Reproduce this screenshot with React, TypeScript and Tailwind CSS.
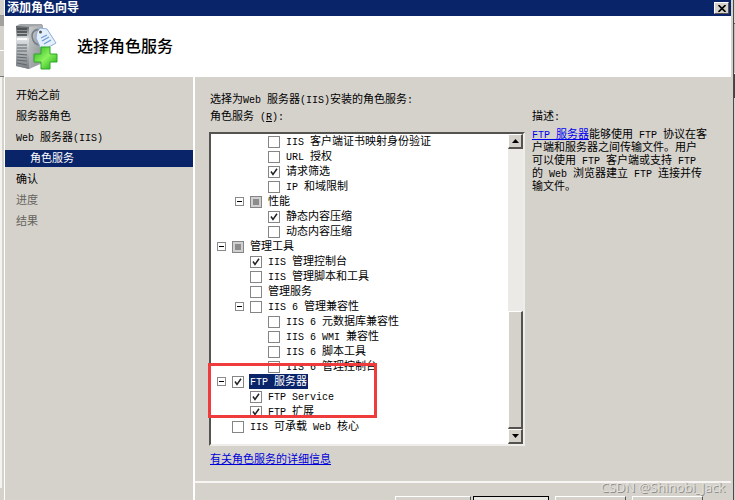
import { useState } from 'react';

type Check = 'on' | 'off' | 'mixed';

interface Role {
  id: string;
  label: string;
  level: 1 | 2 | 3;
  check: Check;
  parent?: boolean;
}

const ROLES: Role[] = [
  { id: 'cert', label: 'IIS 客户端证书映射身份验证', level: 3, check: 'off' },
  { id: 'url', label: 'URL 授权', level: 3, check: 'off' },
  { id: 'filter', label: '请求筛选', level: 3, check: 'on' },
  { id: 'ip', label: 'IP 和域限制', level: 3, check: 'off' },
  { id: 'perf', label: '性能', level: 2, check: 'mixed', parent: true },
  { id: 'static', label: '静态内容压缩', level: 3, check: 'on' },
  { id: 'dynamic', label: '动态内容压缩', level: 3, check: 'off' },
  { id: 'tools', label: '管理工具', level: 1, check: 'mixed', parent: true },
  { id: 'console', label: 'IIS 管理控制台', level: 2, check: 'on' },
  { id: 'scripts', label: 'IIS 管理脚本和工具', level: 2, check: 'off' },
  { id: 'service', label: '管理服务', level: 2, check: 'off' },
  { id: 'iis6', label: 'IIS 6 管理兼容性', level: 2, check: 'off', parent: true },
  { id: 'meta', label: 'IIS 6 元数据库兼容性', level: 3, check: 'off' },
  { id: 'wmi', label: 'IIS 6 WMI 兼容性', level: 3, check: 'off' },
  { id: 'script6', label: 'IIS 6 脚本工具', level: 3, check: 'off' },
  { id: 'console6', label: 'IIS 6 管理控制台', level: 3, check: 'off' },
  { id: 'ftp', label: 'FTP 服务器', level: 1, check: 'on', parent: true },
  { id: 'ftpsvc', label: 'FTP Service', level: 2, check: 'on' },
  { id: 'ftpext', label: 'FTP 扩展', level: 2, check: 'on' },
  { id: 'core', label: 'IIS 可承载 Web 核心', level: 1, check: 'off' },
];

const STEPS = ['开始之前', '服务器角色', 'Web 服务器(IIS)', '角色服务', '确认', '进度', '结果'];

const INDENT = { 1: 'pl-[6px]', 2: 'pl-[24px]', 3: 'pl-[42px]' };

const RAISED = 'border border-t-white border-l-white border-r-[#55534f] border-b-[#55534f] bg-[#d5d2cc]';

// Latin runs are set in a fixed-width face, about half as wide as the Chinese glyphs
const Mixed = ({ text }: { text: string }) => (
  <>
    {text.split(/([\x20-\x7e]+)/).map((part, i) =>
      i % 2 ? (
        <span key={i} className="font-['Liberation_Mono',monospace] text-[10px] leading-none whitespace-pre">{part}</span>
      ) : (
        part
      )
    )}
  </>
);

const ServerIcon = () => (
  <svg className="w-[44px] h-[48px] shrink-0" viewBox="0 0 44 48" aria-hidden="true">
    <defs>
      <linearGradient id="side" x1="0" y1="0" x2="1" y2="1">
        <stop offset="0" stopColor="#c9cbcc" />
        <stop offset="1" stopColor="#85898c" />
      </linearGradient>
      <linearGradient id="front" x1="0" y1="0" x2="0" y2="1">
        <stop offset="0" stopColor="#5c6063" />
        <stop offset="0.3" stopColor="#dfe3e6" />
        <stop offset="1" stopColor="#777d82" />
      </linearGradient>
      <linearGradient id="plus" x1="0" y1="0" x2="1" y2="1">
        <stop offset="0" stopColor="#27b51c" />
        <stop offset="0.5" stopColor="#8bf25d" />
        <stop offset="1" stopColor="#16a80f" />
      </linearGradient>
    </defs>
    <path d="M1 3 L5 1 H27 L28 4 V40 L14 46 L1 43Z" fill="#a4a7a9" />
    <path d="M14 4 L28 2 V38 L14 46Z" fill="url(#side)" />
    <path d="M1 3 L14 4 V46 L1 43Z" fill="url(#front)" />
    <path d="M2 6 H12 M2 9 H12 M2 12 H12" stroke="#3f4447" strokeWidth="1.4" />
    <path d="M2 16 H12" stroke="#fff" strokeWidth="2" />
    <path d="M2 22 H12 M2 25 H12 M2 28 H12 M2 31 L12 32 M2 34 L12 35 M2 37 L12 38 M2 40 L12 42" stroke="#62676b" strokeWidth="1.2" />
    <path d="M27 8 C20 4 15 10 18 17 C20 22 25 23 27 20" fill="none" stroke="#747d85" strokeWidth="1.5" />
    <path d="M22 9 L25 5 L32 6 L41 20 L27 28 L21 15Z" fill="#e4effc" stroke="#8faed3" />
    <circle cx="25.500" cy="9" r="1.500" fill="#555" />
    <path d="M26 15 L32 12 M27 18 L34 14 M29 21 L36 17" stroke="#6d9bd6" strokeWidth="1.3" />
    <path d="M26 24 H35 V31 H42 V39 H35 V46 H26 V39 H19 V31 H26Z" fill="url(#plus)" stroke="#2fa52a" strokeWidth="1" />
  </svg>
);

const RoleRow = ({ role, selected, onSelect }: { role: Role; selected: boolean; onSelect: () => void }) => {
  const [check, setCheck] = useState<Check>(role.check);

  return (
    <li className={`flex items-center gap-[6px] h-[15px] ${INDENT[role.level]}`}>
      {role.parent ? (
        <button aria-label="折叠" className="flex items-center justify-center w-[9px] h-[9px] border border-[#8a8a8a] bg-white shrink-0">
          <span className="w-[5px] h-px bg-black" />
        </button>
      ) : (
        <span className="w-[9px] shrink-0" />
      )}
      <span className="relative w-[12px] h-[12px] shrink-0">
        <input
          id={role.id}
          type="checkbox"
          checked={check === 'on'}
          onChange={() => setCheck(check === 'on' ? 'off' : 'on')}
          className="block appearance-none w-[12px] h-[12px] border border-[#858585] bg-white"
        />
        {check === 'on' && (
          <svg className="absolute inset-0 pointer-events-none" viewBox="0 0 12 12" aria-hidden="true">
            <path d="M3 5.500 L5 8.500 L9 2.800" fill="none" stroke="#222" strokeWidth="1.500" />
          </svg>
        )}
        {check === 'mixed' && (
          <span className="absolute inset-[1px] border-2 border-[#d0d0d0] bg-[#8c8c8c] pointer-events-none" />
        )}
      </span>
      <label
        htmlFor={role.id}
        onClick={onSelect}
        className={`h-[15px] leading-[15px] whitespace-nowrap ${selected ? 'bg-[#0a246a] text-white -mx-px px-px' : ''}`}
      >
        <Mixed text={role.label} />
      </label>
    </li>
  );
};

const ScrollBar = () => (
  <div className="flex flex-col w-[15px] shrink-0 bg-[#eceae7]">
    <button aria-label="向上滚动" className={`flex items-center justify-center h-[15px] border-r-2 border-b-2 ${RAISED}`}>
      <svg className="w-[7px] h-[4px]" viewBox="0 0 7 4"><path d="M0 4 L3.500 0 L7 4Z" /></svg>
    </button>
    <div className="flex-[164]" />
    <div className={`flex-[117] ${RAISED} border-r-2 border-b-2`} />
    <button aria-label="向下滚动" className={`flex items-center justify-center h-[15px] ${RAISED} border-r-2 border-b-2`}>
      <svg className="w-[7px] h-[4px]" viewBox="0 0 7 4"><path d="M0 0 L3.500 4 L7 0Z" /></svg>
    </button>
  </div>
);

export default function App() {
  const [selected, setSelected] = useState('ftp');

  return (
    <div className="relative flex h-screen overflow-hidden bg-[#d5d2cc] text-[11px] text-black font-['Liberation_Sans','Noto_Sans_CJK_SC',sans-serif]">
      {/* Window behind, left edge */}
      <div className="flex flex-col w-[5px] shrink-0 border-r border-white bg-[#d5d2cc]">
        <div className="h-[16px] border-b border-[#999]" />
        <div className="h-[10px] bg-[#a3a19d]" />
        <div className="h-[25px] border-b border-white" />
        <div className="h-[26px] border-b border-[#777]" />
        <div className="flex-1 bg-[#f4f3f1] mr-[2px]" />
        <div className="h-[12px]" />
      </div>

      <main className="flex flex-col flex-1 min-w-0">
        <div className="flex items-center justify-between h-[16px] shrink-0 pl-[2px] pr-[2px] bg-[#0a246a]">
          <h1 className="text-[12px] leading-[16px] font-bold text-white">添加角色向导</h1>
          <button aria-label="关闭" className={`flex items-center justify-center w-[15px] h-[12px] ${RAISED}`}>
            <svg className="w-[8px] h-[7px]" viewBox="0 0 8 7"><path d="M0.500 0 L7.500 7 M7.500 0 L0.500 7" stroke="#000" strokeWidth="1.600" /></svg>
          </button>
        </div>

        <header className="flex items-center gap-[18px] h-[61px] shrink-0 pl-[10px] bg-white">
          <ServerIcon />
          <h2 className="text-[16px] leading-[20px] font-medium">选择角色服务</h2>
        </header>

        <div className="flex flex-1 min-h-0">
          <nav className="flex flex-col gap-[4px] w-[190px] shrink-0 pt-[10px] border-r-2 border-white">
            {STEPS.map((step, i) => (
              <a
                key={step}
                href="#"
                className={`block h-[17px] leading-[17px] ${
                  i === 3 ? 'pl-[25px] bg-[#0a246a] text-white' : i > 4 ? 'pl-[11px] text-[#66645c]' : 'pl-[11px]'
                }`}
              >
                <Mixed text={step} />
              </a>
            ))}
          </nav>

          <div className="flex flex-col flex-1 min-w-0">
            <section className="flex gap-[7px] shrink-0 pl-[14px] pt-[14px] pb-[14px] border-b-2 border-[#f7f6f4]">
              <div className="flex-1 min-w-0">
                <p className="pl-px h-[17px] leading-[17px]"><Mixed text="选择为Web 服务器(IIS)安装的角色服务:" /></p>
                <p className="pl-px h-[17px] leading-[17px]">
                  <Mixed text="角色服务 (" />
                  <span className="underline leading-none"><Mixed text="R" /></span>
                  <Mixed text="):" />
                </p>
                <div className="relative mt-[7px]">
                  <div className="flex border-2 border-t-[#55534f] border-l-[#55534f] border-r-[#efedea] border-b-[#efedea] bg-white">
                    <ul className="flex-1 min-w-0 pb-[10px]">
                      {ROLES.map((role) => (
                        <RoleRow
                          key={role.id}
                          role={role}
                          selected={selected === role.id}
                          onSelect={() => setSelected(role.id)}
                        />
                      ))}
                    </ul>
                    <ScrollBar />
                  </div>
                  {/* Highlight round the FTP group */}
                  <div className="absolute left-[-1px] top-[231px] w-[169px] h-[55px] border-[3px] border-[#ef3b3b] pointer-events-none" />
                </div>
                <a href="#" className="block w-fit mt-[5px] ml-px leading-[16px] text-[#0000d8] underline">有关角色服务的详细信息</a>
              </div>

              <aside className="w-[199px] shrink-0">
                <h3 className="mt-[17px] h-[17px] leading-[17px]"><Mixed text="描述:" /></h3>
                <div className="mt-[3px] leading-[13px] whitespace-nowrap">
                  <p className="h-[13px]">
                    <a href="#" className="text-[#0000ee] underline"><Mixed text="FTP 服务器" /></a>
                    <Mixed text="能够使用 FTP 协议在客" />
                  </p>
                  <p className="h-[13px]">户端和服务器之间传输文件。用户</p>
                  <p className="h-[13px]"><Mixed text="可以使用 FTP 客户端或支持 FTP" /></p>
                  <p className="h-[13px]"><Mixed text="的 Web 浏览器建立 FTP 连接并传" /></p>
                  <p className="h-[13px]">输文件。</p>
                </div>
              </aside>
            </section>

            {/* Wizard buttons, cut off by the bottom edge */}
            <footer className="flex justify-end gap-[6px] shrink-0 pt-[13px] pr-[28px]">
              <div className="flex gap-[2px]">
                <button aria-label="上一步" className={`w-[76px] h-[23px] ${RAISED}`} />
                <button aria-label="下一步" className="w-[76px] h-[23px] border border-black bg-[#e8e6e2]" />
              </div>
              <button aria-label="安装" className={`w-[71px] h-[23px] ${RAISED}`} />
              <button aria-label="取消" className={`w-[71px] h-[23px] ${RAISED}`} />
            </footer>
          </div>
        </div>
      </main>

      {/* Window behind, right edge */}
      <div className="flex flex-col w-[4px] shrink-0 border-l border-[#d5d2cc]">
        <div className="flex flex-col flex-1 ml-px border-l border-[#4a4a4a]">
          <div className="h-[24px] border-b border-[#555] bg-[#d5d2cc]" />
          <div className="h-[50px] border-b border-white bg-[#bdbbb7]" />
          <div className="h-[24px] bg-[#444]" />
          <div className="flex-1 bg-[#d5d2cc]" />
        </div>
      </div>

      <p className="absolute right-[10px] bottom-[4px] font-['Open_Sans',sans-serif] text-[13px] leading-[18px] text-[#e3e1de] [text-shadow:1px_1px_0_#8f8d89]">
        CSDN @Shinobi_Jack
      </p>
    </div>
  );
}
